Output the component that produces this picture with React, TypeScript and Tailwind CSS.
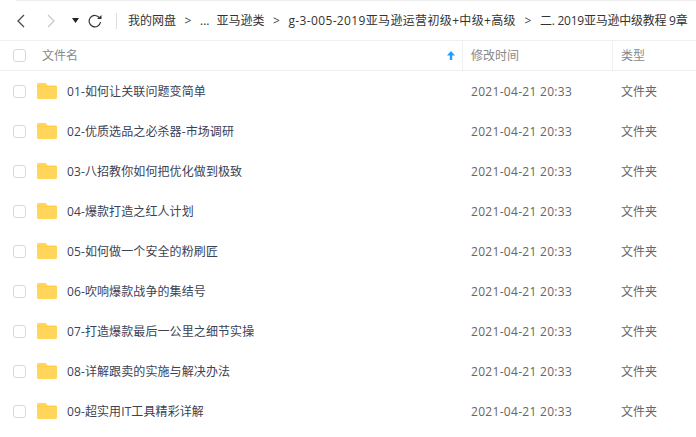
import React from 'react';

const files = [
  '01-如何让关联问题变简单',
  '02-优质选品之必杀器-市场调研',
  '03-八招教你如何把优化做到极致',
  '04-爆款打造之红人计划',
  '05-如何做一个安全的粉刷匠',
  '06-吹响爆款战争的集结号',
  '07-打造爆款最后一公里之细节实操',
  '08-详解跟卖的实施与解决办法',
  '09-超实用IT工具精彩详解',
];

const Checkbox = () => (
  <span className="block w-[13px] h-[13px] rounded-[3px] border border-[#d8d8d8] bg-white shrink-0" />
);

const Folder = () => (
  <svg width="20" height="16" viewBox="0 0 20 16" className="block shrink-0">
    <path d="M1.500 0H7.500C8.500 0 9 .4 9.500 1.100L10.500 2.500H18.500C19.400 2.500 20 3.100 20 4V14.500C20 15.400 19.400 16 18.500 16H1.500C.6 16 0 15.400 0 14.500V1.500C0 .6.6 0 1.500 0Z" fill="#ffd659" />
    <path d="M0 3H20V3.600H0Z" fill="#ffc93c" />
  </svg>
);

const Sep = () => <span className="w-[24px] text-center text-[#444444]">&gt;</span>;

export default function App() {
  return (
    <div className="w-[696px] h-[437px] overflow-hidden bg-white text-[12px] font-['Open_Sans','Noto_Sans_CJK_SC',sans-serif]">
      <div className="h-px ml-4 bg-[#eeeeee]" />
      {/* toolbar */}
      <div className="h-[39px] flex items-center whitespace-nowrap">
        <svg width="10" height="16" viewBox="0 0 10 16" fill="none" className="ml-[16px] shrink-0">
          <path d="M8 2 2 8l6 6" stroke="#4a4a4a" strokeWidth="1.300" />
        </svg>
        <svg width="10" height="16" viewBox="0 0 10 16" fill="none" className="ml-[20px] shrink-0">
          <path d="m2 2 6 6-6 6" stroke="#c9c9c9" strokeWidth="1.300" />
        </svg>
        <svg width="7" height="5" viewBox="0 0 7 5" className="ml-[16px] shrink-0">
          <path d="M0 0h7L3.500 5Z" fill="#222222" />
        </svg>
        <svg width="14" height="14" viewBox="0 0 14 14" fill="none" className="ml-[9px] shrink-0">
          <path d="M11.600 4A5.700 5.700 0 1 0 12.500 8" stroke="#333333" strokeWidth="1.200" />
          <path d="M9 5h4.500V1Z" fill="#333333" />
        </svg>
        <span className="ml-[14px] w-px h-4 bg-[#dddddd] shrink-0" />
        <div className="ml-[11px] pt-px flex items-center text-[#333333]">
          <span>我的网盘</span>
          <Sep />
          <span>...</span>
          <span className="ml-[7px]">亚马逊类</span>
          <Sep />
          <span className="tracking-[0.35px]">g-3-005-2019亚马逊运营初级+中级+高级</span>
          <Sep />
          <span className="tracking-[-0.25px]">二. 2019亚马逊中级教程 9章</span>
        </div>
      </div>
      {/* header */}
      <div className="h-[31px] flex items-center border-y border-[#f0f0f0] text-[#888888]">
        <div className="w-[463px] h-full flex items-center border-r border-[#f0f0f0] pl-[13px] pr-[7px]">
          <Checkbox />
          <span className="ml-[16px] flex-1">文件名</span>
          <svg width="8" height="9" viewBox="0 0 8 9">
            <path d="M4 0 8 4.500H5.200V9H2.800V4.500H0Z" fill="#1e9fff" />
          </svg>
        </div>
        <div className="w-[150px] h-full flex items-center border-r border-[#f0f0f0] pl-[8px]">修改时间</div>
        <div className="pl-[8px]">类型</div>
      </div>
      {/* file rows */}
      <div>
        {files.map((name) => (
          <div key={name} className="h-[40px] flex items-center">
            <div className="w-[471px] flex items-center pl-[13px]">
              <Checkbox />
              <span className="ml-[11px] mb-[1px]"><Folder /></span>
              <span className="ml-[10px] pt-[2px] text-[#3b4254] tracking-[0.1px]">{name}</span>
            </div>
            <div className="w-[150px] pt-[2px] text-[#666666] tracking-[0.3px]">2021-04-21 20:33</div>
            <div className="pt-[2px] text-[#666666]">文件夹</div>
          </div>
        ))}
      </div>
    </div>
  );
}
